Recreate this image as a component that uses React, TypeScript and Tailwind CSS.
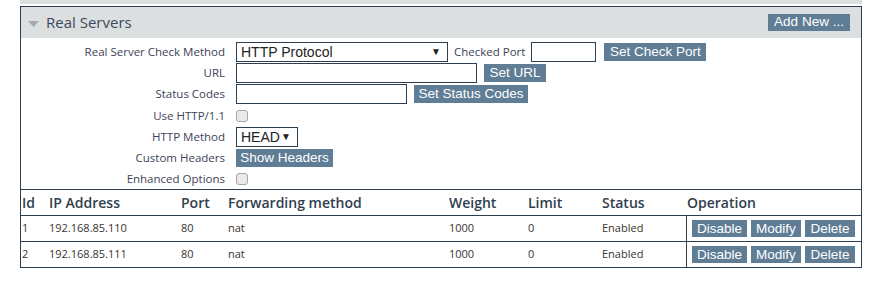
import React from "react";

const SANS = "font-['Open_Sans','Liberation_Sans',sans-serif]";
const ARIAL = "font-['Liberation_Sans',Arial,sans-serif]";

function Btn({ children, className = "" }: { children: React.ReactNode; className?: string }) {
  return (
    <span
      className={`inline-flex shrink-0 items-center justify-center bg-[#5f7d95] text-white text-[13.5px] leading-none px-[4px] ${ARIAL} ${className}`}
    >
      {children}
    </span>
  );
}

function Box({ w, className = "", children }: { w: string; className?: string; children?: React.ReactNode }) {
  return (
    <span
      className={`inline-flex shrink-0 items-center h-[20px] border border-[#2c3e50] bg-white ${w} ${ARIAL} text-[14px] leading-none text-[#222] pl-[4px] pr-[6px] ${className}`}
    >
      {children}
    </span>
  );
}

function Check() {
  return <span className="inline-block w-[12px] h-[12px] rounded-[3px] border border-[#a7a7a7] bg-[#e9e9e9]" />;
}

function Row({ label, h = "h-[21px]", children }: { label: string; h?: string; children: React.ReactNode }) {
  return (
    <div className={`grid grid-cols-[204px_1fr] gap-x-[11px] items-center ${h}`}>
      <div className="text-right text-[11.5px] leading-none text-[#3d4258]">{label}</div>
      <div className="flex items-center">{children}</div>
    </div>
  );
}

const COLS = "grid grid-cols-[27px_132px_47px_221px_79px_74px_85px_1fr]";

const rows = [
  { id: 1, ip: "192.168.85.110" },
  { id: 2, ip: "192.168.85.111" },
];

export default function App() {
  return (
    <div className={`w-[881px] h-[285px] bg-white ${SANS}`}>
      <div className="ml-[20px] w-[842px] h-[4px] bg-[#dcdfe0]" />
      <div className="ml-[20px] mt-[2px] w-[842px] border border-[#2c3e50]">
        {/* header */}
        <div className="h-[31px] bg-[#dcdfe0] flex items-center pl-[7px] pr-[11px]">
          <svg width="11" height="6" viewBox="0 0 11 6" className="mt-[2px]">
            <path d="M0 0H11L5.5 6Z" fill="#a3a9ad" />
          </svg>
          <span className="ml-[7px] text-[15px] text-[#3b4a5b] leading-none">Real Servers</span>
          <Btn className="ml-auto h-[17px] mt-[-1px] w-[82px]">Add New ...</Btn>
        </div>

        {/* form */}
        <div className="pt-[3px]">
          <Row label="Real Server Check Method">
            <Box w="w-[212px]">
              <span>HTTP Protocol</span>
              <span className="ml-auto text-[10px]">▼</span>
            </Box>
            <span className="ml-[6px] text-[11.5px] leading-none text-[#3d4258]">Checked Port</span>
            <Box w="w-[65px]" className="ml-[6px]" />
            <Btn className="ml-[8px] h-[18px] w-[102px]">Set Check Port</Btn>
          </Row>
          <Row label="URL">
            <Box w="w-[241px]" />
            <Btn className="ml-[7px] h-[18px] w-[62px]">Set URL</Btn>
          </Row>
          <Row label="Status Codes" h="h-[22px]">
            <Box w="w-[171px]" />
            <Btn className="ml-[7px] h-[18px] w-[114px]">Set Status Codes</Btn>
          </Row>
          <Row label="Use HTTP/1.1">
            <Check />
          </Row>
          <Row label="HTTP Method">
            <Box w="w-[62px]">
              <span>HEAD</span>
              <span className="ml-auto text-[10px]">▼</span>
            </Box>
          </Row>
          <Row label="Custom Headers">
            <Btn className="h-[18px] w-[97px]">Show Headers</Btn>
          </Row>
          <Row label="Enhanced Options">
            <Check />
          </Row>
        </div>

        {/* table */}
        <div className="border-t border-[#2c3e50]">
          <div className={`${COLS} h-[26px] items-center text-[14px] font-semibold text-[#2f3e4e] border-b border-[#2c3e50]`}>
            {["Id", "IP Address", "Port", "Forwarding method", "Weight", "Limit", "Status", "Operation"].map((h) => (
              <div key={h} className="pl-[1px] whitespace-nowrap">{h}</div>
            ))}
          </div>
          {rows.map((r, i) => (
            <div
              key={r.id}
              className={`${COLS} h-[25px] items-center text-[11px] text-[#383430] ${i === 0 ? "border-b border-[#2c3e50] box-content" : ""}`}
            >
              <div className="pl-[1px]">{r.id}</div>
              <div className="pl-[1px]">{r.ip}</div>
              <div className="pl-[1px]">80</div>
              <div className="pl-[1px]">nat</div>
              <div className="pl-[1px]">1000</div>
              <div className="pl-[1px]">0</div>
              <div className="pl-[1px]">Enabled</div>
              <div className="h-full border-l border-[#2c3e50] pl-[5px] flex items-center gap-[4px]">
                <Btn className="h-[17px] w-[55px]">Disable</Btn>
                <Btn className="h-[17px] w-[50px]">Modify</Btn>
                <Btn className="h-[17px] w-[50px]">Delete</Btn>
              </div>
            </div>
          ))}
        </div>
      </div>
    </div>
  );
}
